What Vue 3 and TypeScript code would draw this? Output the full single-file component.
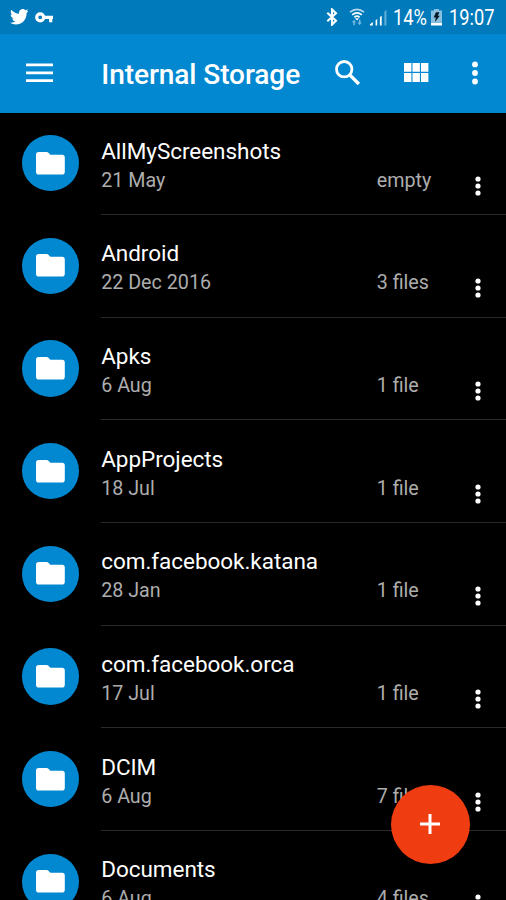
<script setup lang="ts">
interface Entry {
  name: string
  date: string
  count: string
}

const entries: Entry[] = [
  { name: 'AllMyScreenshots', date: '21 May', count: 'empty' },
  { name: 'Android', date: '22 Dec 2016', count: '3 files' },
  { name: 'Apks', date: '6 Aug', count: '1 file' },
  { name: 'AppProjects', date: '18 Jul', count: '1 file' },
  { name: 'com.facebook.katana', date: '28 Jan', count: '1 file' },
  { name: 'com.facebook.orca', date: '17 Jul', count: '1 file' },
  { name: 'DCIM', date: '6 Aug', count: '7 files' },
  { name: 'Documents', date: '6 Aug', count: '4 files' },
]
</script>

<template>
  <div class="screen">
    <div class="status">
      <svg class="twitter" viewBox="0 2.2 24 19.6" preserveAspectRatio="none">
        <path fill="#fff" d="M23.953 4.57a10 10 0 01-2.825.775 4.958 4.958 0 002.163-2.723c-.951.555-2.005.959-3.127 1.184a4.92 4.92 0 00-8.384 4.482C7.69 8.095 4.067 6.13 1.64 3.162a4.822 4.822 0 00-.666 2.475c0 1.71.87 3.213 2.188 4.096a4.904 4.904 0 01-2.228-.616v.06a4.923 4.923 0 003.946 4.827 4.996 4.996 0 01-2.212.085 4.936 4.936 0 004.604 3.417 9.867 9.867 0 01-6.102 2.105c-.39 0-.779-.023-1.17-.067a13.995 13.995 0 007.557 2.209c9.053 0 13.998-7.496 13.998-13.985 0-.21 0-.42-.015-.63A9.935 9.935 0 0024 4.59z" />
      </svg>
      <svg class="key" viewBox="0 0 18 11">
        <circle cx="5.2" cy="5.3" r="3.5" fill="none" stroke="#fff" stroke-width="3.2" />
        <path fill="#fff" d="M9 3.8h9v3.1h-.7v3.3h-3.2V6.9H9z" />
      </svg>
      <span class="spacer"></span>
      <svg class="bluetooth" viewBox="0 0 12 18">
        <path d="M1.3 4.8l8.7 8-4 3.8V1.4l4 3.8-8.7 8" fill="none" stroke="#fff" stroke-width="2.1" />
      </svg>
      <svg class="wifi" viewBox="0 0 16 18">
        <g fill="none" stroke="#fff" stroke-width="1.7">
          <path d="M1 4.2q7-5.8 14 0" opacity=".7" />
          <path d="M3.2 6.9q4.8-4 9.6 0" />
          <path d="M5.4 9.3q2.6-2.2 5.2 0" />
        </g>
        <path d="M6 10.2h4L8 12.6z" fill="#fff" />
        <path d="M3 14.2l2-2.5 2 2.5H5.8v3H4.3v-3zM8.6 14.6h1.3v-3h1.5v3h1.3l-2.1 2.6z" fill="#7abbe1" />
      </svg>
      <svg class="signal" viewBox="0 0 18 17">
        <path fill="#fff" d="M0 16.5v-1.2L2.8 13v3.5zM5.6 11.3l1.6-1.4v6.6H5.6zM9.9 8.2l1.8-1.6v9.9H9.9z" />
        <path fill="#65aed9" d="M14.4 2.7L16.4.7v15.8h-2z" />
      </svg>
      <span class="status-text percent">14%</span>
      <svg class="battery" viewBox="0 0 11 17">
        <path fill="#86bfdf" d="M3 0h5v1.5h3V13H0V1.5h3z" />
        <path fill="#fff" d="M0 13.5h11v3H0z" />
        <path fill="#071827" d="M5 3.2h3.4L6.8 6.7h2L4 13l.8-4.4H2.7z" />
      </svg>
      <span class="status-text clock">19:07</span>
    </div>

    <header class="bar">
      <svg class="menu" viewBox="0 0 27 20">
        <path d="M0 1.8h27M0 9.8h27M0 17.7h27" stroke="#fff" stroke-width="2.7" />
      </svg>
      <h1>Internal Storage</h1>
      <svg class="search" viewBox="0 0 26 26">
        <circle cx="9.2" cy="9.2" r="7.7" fill="none" stroke="#fff" stroke-width="2.8" />
        <path d="M15 15.1l8.9 8.9" stroke="#fff" stroke-width="3.4" />
      </svg>
      <svg class="grid" viewBox="0 0 24.6 19">
        <path fill="#fff" d="M0 0h7.4v8.8H0zM8.5 0h7.4v8.8H8.5zM17 0h7.4v8.8H17zM0 10h7.4v8.9H0zM8.5 10h7.4v8.9H8.5zM17 10h7.4v8.9H17z" />
      </svg>
      <svg class="more" viewBox="0 0 6 24">
        <circle cx="3" cy="3.4" r="2.9" fill="#fff" />
        <circle cx="3" cy="12" r="2.9" fill="#fff" />
        <circle cx="3" cy="20.5" r="2.9" fill="#fff" />
      </svg>
    </header>

    <main class="list">
      <div v-for="entry in entries" :key="entry.name" class="row">
        <div class="avatar">
          <svg viewBox="0 0 29 23">
            <path fill="#fff" d="M2.7 0h8q1 0 1.7.8l1.9 1.9h11.8q2.7 0 2.7 2.8v14.2q0 2.8-2.7 2.8H2.7Q0 22.5 0 19.7V2.8Q0 0 2.7 0z" />
          </svg>
        </div>
        <div class="body">
          <div class="name">{{ entry.name }}</div>
          <div class="meta">
            <span class="date">{{ entry.date }}</span>
            <span class="count">{{ entry.count }}</span>
          </div>
          <svg class="dots" viewBox="0 0 6 20">
            <circle cx="3" cy="3" r="2.6" fill="#fff" />
            <circle cx="3" cy="10" r="2.6" fill="#fff" />
            <circle cx="3" cy="17" r="2.6" fill="#fff" />
          </svg>
        </div>
      </div>
    </main>

    <button class="fab" aria-label="Add">
      <svg viewBox="0 0 20 20">
        <path d="M10 0v20M0 10h20" stroke="#fff" stroke-width="3" />
      </svg>
    </button>
  </div>
</template>

<style>
html,
body {
  margin: 0;
  background: #000;
  overflow: hidden;
}
</style>

<style scoped>
.screen {
  position: relative;
  width: 506px;
  height: 900px;
  overflow: hidden;
  background: #000;
  color: #fff;
  font-family: Roboto, 'Liberation Sans', sans-serif;
}

svg {
  display: block;
  flex: none;
}

.status {
  display: flex;
  align-items: flex-start;
  box-sizing: border-box;
  height: 34px;
  padding: 8px 12.5px 0 9.5px;
  background: #017abb;
}

.twitter {
  width: 18.5px;
  height: 15.5px;
  margin-top: 1.3px;
}

.key {
  width: 18px;
  height: 11px;
  margin: 3.7px 0 0 7px;
}

.spacer {
  flex: 1;
}

.bluetooth {
  width: 12px;
  height: 18px;
}

.wifi {
  width: 16px;
  height: 18px;
  margin-left: 11px;
}

.signal {
  width: 18px;
  height: 17px;
  margin: 1px 0 0 5px;
}

.status-text {
  flex: none;
  font-size: 22px;
  line-height: 26px;
  margin-top: -3.5px;
  white-space: nowrap;
  transform-origin: 0 50%;
  transform: scaleX(0.83);
}

.percent {
  width: 38px;
  margin-left: 5.5px;
}

.battery {
  width: 11px;
  height: 17px;
  margin-top: 0.5px;
}

.clock {
  width: 45px;
  margin-left: 6.5px;
}

.bar {
  display: flex;
  align-items: flex-start;
  box-sizing: border-box;
  height: 78.5px;
  padding: 0 28px 0 26px;
  background: #0288d1;
}

.menu {
  width: 27px;
  height: 20px;
  margin-top: 29px;
}

h1 {
  flex: 1;
  margin: 24px 0 0 48.3px;
  font-size: 28.1px;
  line-height: 34px;
  font-weight: 500;
  letter-spacing: -0.1px;
  white-space: nowrap;
}

.search {
  width: 26px;
  height: 26px;
  margin-top: 26px;
}

.grid {
  width: 24.6px;
  height: 19px;
  margin: 29px 0 0 43.5px;
}

.more {
  width: 6px;
  height: 24px;
  margin: 27px 0 0 43.3px;
}

.row {
  display: flex;
  box-sizing: border-box;
  height: 102.67px;
  padding-left: 22.3px;
}

.avatar {
  display: flex;
  align-items: center;
  justify-content: center;
  flex: none;
  width: 56.4px;
  height: 56.4px;
  margin: 22.6px 22.5px 0 0;
  border-radius: 50%;
  background: #0288d1;
}

.avatar svg {
  width: 29px;
  height: 23px;
}

.body {
  flex: 1;
  display: grid;
  grid-template-columns: 1fr 6px;
  grid-template-rows: 27px 1fr;
  box-sizing: border-box;
  padding: 25.1px 25px 0 0;
  border-bottom: 1px solid #292929;
}

.name {
  grid-column: 1 / 3;
  font-size: 22.5px;
  line-height: 27px;
  letter-spacing: -0.04px;
  white-space: nowrap;
}

.meta {
  display: grid;
  grid-template-columns: 275.5px 1fr;
  align-items: start;
  padding-top: 4px;
  color: #adadad;
  font-size: 19.7px;
  line-height: 24px;
}

.dots {
  width: 6px;
  height: 20px;
  margin-top: 11px;
}

.fab {
  position: absolute;
  left: 390.5px;
  top: 784.5px;
  display: flex;
  align-items: center;
  justify-content: center;
  width: 79px;
  height: 79px;
  padding: 0;
  border: 0;
  border-radius: 50%;
  background: #f03c11;
}

.fab svg {
  width: 20px;
  height: 20px;
}
</style>
